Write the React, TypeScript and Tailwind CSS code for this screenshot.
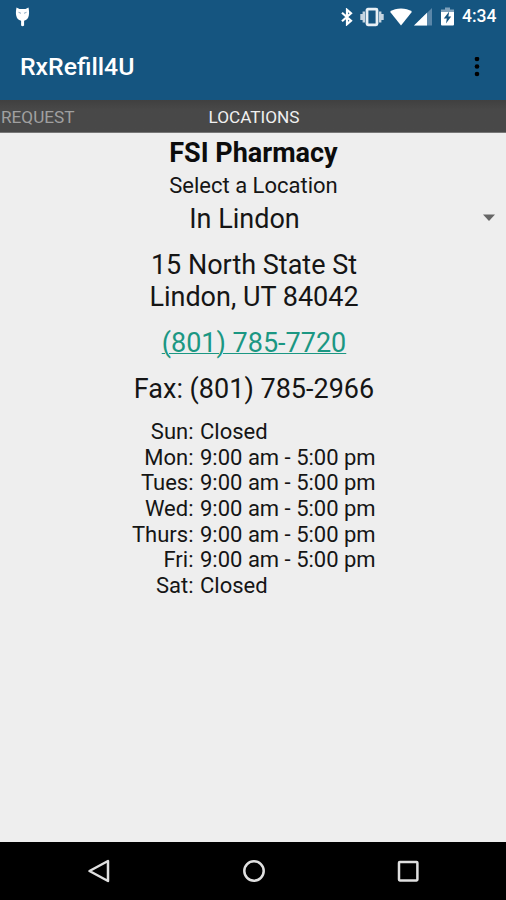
const HOURS = [
  { day: "Sun:", time: "Closed" },
  { day: "Mon:", time: "9:00 am - 5:00 pm" },
  { day: "Tues:", time: "9:00 am - 5:00 pm" },
  { day: "Wed:", time: "9:00 am - 5:00 pm" },
  { day: "Thurs:", time: "9:00 am - 5:00 pm" },
  { day: "Fri:", time: "9:00 am - 5:00 pm" },
  { day: "Sat:", time: "Closed" },
];

function StatusBar() {
  return (
    <div className="flex h-[33px] items-center justify-between pl-[15px] pr-[9px] text-white">
      <svg width="15" height="22" viewBox="0 0 15 22">
        <path
          fill="white"
          d="M1.500 1.500 4.500 3h6l3-1.500c.6 3 .8 5.500.3 8-.6 2.800-2 4.600-4.700 5.200v4.800q-1.600 1.600-3 0v-4.800C3.200 14.100 1.800 12.300 1.200 9.500c-.5-2.500-.3-5 .3-8z"
        />
        <path stroke="#7f9db8" strokeWidth="0.900" fill="none" d="M3.500 6.300 6 7.300M11.500 6.300 9 7.300" />
      </svg>
      <div className="flex items-center">
        <svg width="12" height="18" viewBox="0 0 12 18">
          <path
            fill="none"
            stroke="white"
            strokeWidth="2.200"
            d="M1 4.700 10 12.800 6 16.200V1.800l4 3.400-9 8.100"
          />
        </svg>
        <svg className="ml-[7px]" width="24" height="20" viewBox="0 0 24 20">
          <rect x="7" y="2.200" width="10" height="15.600" rx="1" fill="none" stroke="#e8f0f5" strokeWidth="2.800" />
          <path fill="none" stroke="#c5d5e1" strokeWidth="2.400" d="M3.800 4.500v11M20.200 4.500v11M1.500 7v6M22.500 7v6" />
        </svg>
        <svg className="ml-[6px]" width="22" height="18" viewBox="0 0 22 18">
          <path fill="white" d="M0 3.800C6-.6 16-.6 22 3.800L11 17.500z" />
        </svg>
        <svg className="ml-[2px]" width="18" height="18" viewBox="0 0 18 18">
          <path fill="#5b87a9" d="M0 17.500 18 0v17.500z" />
          <path fill="white" d="M0 17.500 13 4.800v12.700z" />
        </svg>
        <svg className="ml-[9px]" width="13" height="19" viewBox="0 0 13 19">
          <path fill="#7fa1bb" d="M4 .5h5V2.500h4V6H0V2.500h4z" />
          <path fill="white" d="M0 5h13v12.500q0 1-1 1H1q-1 0-1-1z" />
          <path fill="#155580" d="M8.200 4.500 2.800 11.500h3L5 16.500l5.200-7H7.400z" />
        </svg>
        <span className="ml-[8px] mr-px w-[34px] whitespace-nowrap text-[17.500px] leading-none font-medium">4:34</span>
      </div>
    </div>
  );
}

function AppBar() {
  return (
    <div className="flex h-[67px] items-center justify-between pl-5 pr-[26px]">
      <h1 className="pt-px text-[24.800px] leading-none font-medium text-white">RxRefill4U</h1>
      <svg width="6" height="20" viewBox="0 0 6 20" fill="black">
        <circle cx="3" cy="2" r="2.300" />
        <circle cx="3" cy="9.500" r="2.300" />
        <circle cx="3" cy="17" r="2.300" />
      </svg>
    </div>
  );
}

function TabStrip() {
  return (
    <div className="flex h-[33px] items-center border-b border-[#777] bg-gradient-to-b from-[#404040] to-[#484848] to-30% pt-[4px] text-[17.200px] leading-none">
      <span className="w-[208.500px] pl-px text-[#a0a0a0]">REQUEST</span>
      <span className="text-[#f0f0f0]">LOCATIONS</span>
    </div>
  );
}

function NavBar() {
  return (
    <div className="flex h-[58px] items-center justify-between bg-black pl-[87px] pr-[86px]">
      <svg width="24" height="24" viewBox="0 0 24 24" fill="none" stroke="#e0e0e0" strokeWidth="2.500" strokeLinejoin="round">
        <path d="M21 2v20L2.500 12z" />
      </svg>
      <svg width="24" height="24" viewBox="0 0 24 24" fill="none" stroke="#e0e0e0" strokeWidth="2.500">
        <circle cx="12" cy="12" r="9.700" />
      </svg>
      <svg width="24" height="24" viewBox="0 0 24 24" fill="none" stroke="#e0e0e0" strokeWidth="2.500">
        <rect x="3" y="3" width="18.400" height="18.400" rx="0.800" />
      </svg>
    </div>
  );
}

export default function App() {
  return (
    <div className="flex h-[900px] w-[506px] flex-col overflow-hidden bg-[#eeeeee] font-['Roboto',sans-serif] text-[#151515]">
      <header className="bg-[#155580]">
        <StatusBar />
        <AppBar />
      </header>
      <TabStrip />
      <main className="flex flex-1 flex-col pt-[5px] text-center text-[27px] leading-[31.500px]">
        <h2 className="pl-px font-bold text-[#0c0c0c]">FSI Pharmacy</h2>
        <p className="mt-[3px] pl-px text-[22px] leading-[26px]">Select a Location</p>
        <div className="mt-[5px] flex items-center pr-[11px]">
          <span className="flex-1 pl-[6px]">In Lindon</span>
          <svg className="-mt-[2px]" width="12" height="8" viewBox="0 0 12 8" fill="#666">
            <path d="M0 .5h12L6 7z" />
          </svg>
        </div>
        <p className="mt-[15px] pl-[2px]">
          15 North State St
          <br />
          Lindon, UT 84042
        </p>
        <p className="mt-[15px] pl-[2px]">
          <a className="text-[#1b9783] underline decoration-1">(801) 785-7720</a>
        </p>
        <p className="mt-[14px] pl-[2px]">Fax: (801) 785-2966</p>
        <div className="mt-[14px] grid grid-cols-[193.500px_1fr] gap-x-[6.500px] text-[22px] leading-[25.650px]">
          {HOURS.map(({ day, time }) => (
            <div key={day} className="contents">
              <span className="text-right">{day}</span>
              <span className="text-left">{time}</span>
            </div>
          ))}
        </div>
      </main>
      <NavBar />
    </div>
  );
}
